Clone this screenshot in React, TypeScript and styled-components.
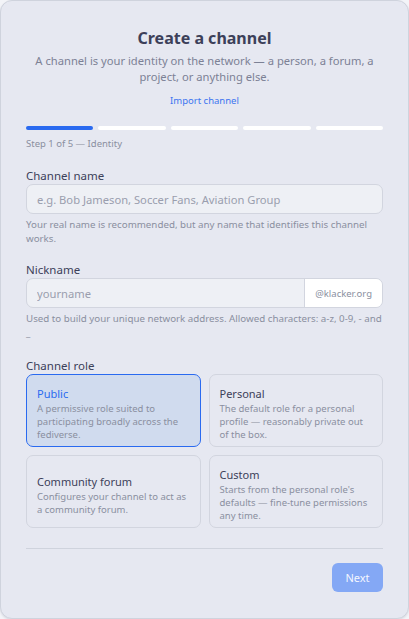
import React from "react";
import styled, { createGlobalStyle } from "styled-components";

const Global = createGlobalStyle`
  html, body { margin: 0; padding: 0; background: #f3f4f8; }
  body { font-family: "Noto Sans", "Open Sans", sans-serif; }
  * { box-sizing: border-box; }
`;

const Card = styled.div`
  width: 409px;
  min-height: 619px;
  background: #e6e8f1;
  border: 1px solid #cfd3dd;
  border-radius: 12px;
  box-shadow: 0 1px 2px rgba(30, 40, 70, 0.12);
  padding: 24px 25px 26px;
  display: flex;
  flex-direction: column;
`;

const Header = styled.header`
  display: flex;
  flex-direction: column;
  align-items: center;
  text-align: center;
`;

const Title = styled.h1`
  margin: 0;
  font-size: 16px;
  line-height: 26px;
  font-weight: 700;
  color: #3c4059;
`;

const Lead = styled.p`
  margin: 2px 0 0;
  font-size: 11.2px;
  line-height: 16px;
  color: #7c8195;
`;

const LinkButton = styled.a`
  margin-top: 9px;
  font-size: 9.5px;
  line-height: 14px;
  color: #3b74f0;
  cursor: pointer;
`;

const Steps = styled.div`
  margin-top: 18px;
  display: grid;
  grid-template-columns: repeat(5, 1fr);
  gap: 5px;
`;

const StepBar = styled.div<{ $active?: boolean }>`
  height: 4px;
  border-radius: 2px;
  background: ${(p) => (p.$active ? "#2a6af0" : "#ffffff")};
`;

const StepText = styled.div`
  margin-top: 7px;
  font-size: 9.5px;
  line-height: 14px;
  color: #8a8fa0;
`;

const Field = styled.div<{ $top: number }>`
  margin-top: ${(p) => p.$top}px;
  display: flex;
  flex-direction: column;
`;

const Label = styled.label`
  font-size: 11.5px;
  line-height: 16px;
  color: #3c4059;
`;

const InputShell = styled.div`
  display: flex;
  height: 30px;
  border: 1px solid #d2d5df;
  border-radius: 7px;
  background: #eef0f5;
  overflow: hidden;
`;

const Input = styled.input`
  flex: 1;
  min-width: 0;
  border: 0;
  outline: 0;
  background: transparent;
  padding: 0 10px;
  font-family: inherit;
  font-size: 11.2px;
  color: #3c4059;
  &::placeholder { color: #9a9eae; }
`;

const Addon = styled.span`
  display: flex;
  align-items: center;
  padding: 0 10px;
  background: #ffffff;
  border-left: 1px solid #d2d5df;
  font-size: 9.5px;
  color: #8a8fa0;
`;

const Help = styled.p`
  margin: 4px 0 0;
  font-size: 9.75px;
  line-height: 14px;
  color: #8a8fa0;
`;

const RoleGrid = styled.div`
  display: grid;
  grid-template-columns: 1fr 1fr;
  gap: 8px;
`;

const RoleCard = styled.button<{ $selected?: boolean }>`
  height: 73px;
  display: flex;
  flex-direction: column;
  justify-content: center;
  align-items: flex-start;
  text-align: left;
  padding: 6px 10px 0;
  border-radius: 7px;
  font-family: inherit;
  cursor: pointer;
  border: 1px solid ${(p) => (p.$selected ? "#2a6af0" : "#d2d5df")};
  background: ${(p) => (p.$selected ? "#d0dbee" : "#e6e8f1")};
`;

const RoleName = styled.span<{ $selected?: boolean }>`
  font-size: 11px;
  line-height: 15px;
  color: ${(p) => (p.$selected ? "#2a6af0" : "#3c4059")};
  margin-bottom: 1px;
`;

const RoleDesc = styled.span`
  font-size: 9.5px;
  line-height: 13px;
  color: #8a8fa0;
`;

const Divider = styled.hr`
  margin: 20px 0 0;
  border: 0;
  border-top: 1px solid #cfd3dd;
`;

const Footer = styled.footer`
  display: flex;
  justify-content: flex-end;
  margin-top: 14px;
`;

const NextButton = styled.button`
  width: 51px;
  height: 29px;
  border: 0;
  border-radius: 6px;
  background: #84a8f5;
  color: #f4f7ff;
  font-family: inherit;
  font-size: 11px;
`;

const roles = [
  {
    name: "Public",
    desc: "A permissive role suited to participating broadly across the fediverse.",
    selected: true,
  },
  {
    name: "Personal",
    desc: "The default role for a personal profile — reasonably private out of the box.",
  },
  {
    name: "Community forum",
    desc: "Configures your channel to act as a community forum.",
  },
  {
    name: "Custom",
    desc: "Starts from the personal role's defaults — fine-tune permissions any time.",
  },
];

export default function App() {
  return (
    <>
      <Global />
      <Card>
        <Header>
          <Title>Create a channel</Title>
          <Lead>
            A channel is your identity on the network — a person, a forum, a
            project, or anything else.
          </Lead>
          <LinkButton>Import channel</LinkButton>
        </Header>

        <Steps>
          {[0, 1, 2, 3, 4].map((i) => (
            <StepBar key={i} $active={i === 0} />
          ))}
        </Steps>
        <StepText>Step 1 of 5 — Identity</StepText>

        <Field $top={17}>
          <Label>Channel name</Label>
          <InputShell>
            <Input placeholder="e.g. Bob Jameson, Soccer Fans, Aviation Group" />
          </InputShell>
          <Help>
            Your real name is recommended, but any name that identifies this
            channel works.
          </Help>
        </Field>

        <Field $top={16}>
          <Label>Nickname</Label>
          <InputShell>
            <Input placeholder="yourname" />
            <Addon>@klacker.org</Addon>
          </InputShell>
          <Help>
            Used to build your unique network address. Allowed characters: a-z,
            0-9, - and _
          </Help>
        </Field>

        <Field $top={18}>
          <Label>Channel role</Label>
          <RoleGrid>
            {roles.map((r) => (
              <RoleCard key={r.name} $selected={r.selected}>
                <RoleName $selected={r.selected}>{r.name}</RoleName>
                <RoleDesc>{r.desc}</RoleDesc>
              </RoleCard>
            ))}
          </RoleGrid>
        </Field>

        <Divider />
        <Footer>
          <NextButton>Next</NextButton>
        </Footer>
      </Card>
    </>
  );
}
